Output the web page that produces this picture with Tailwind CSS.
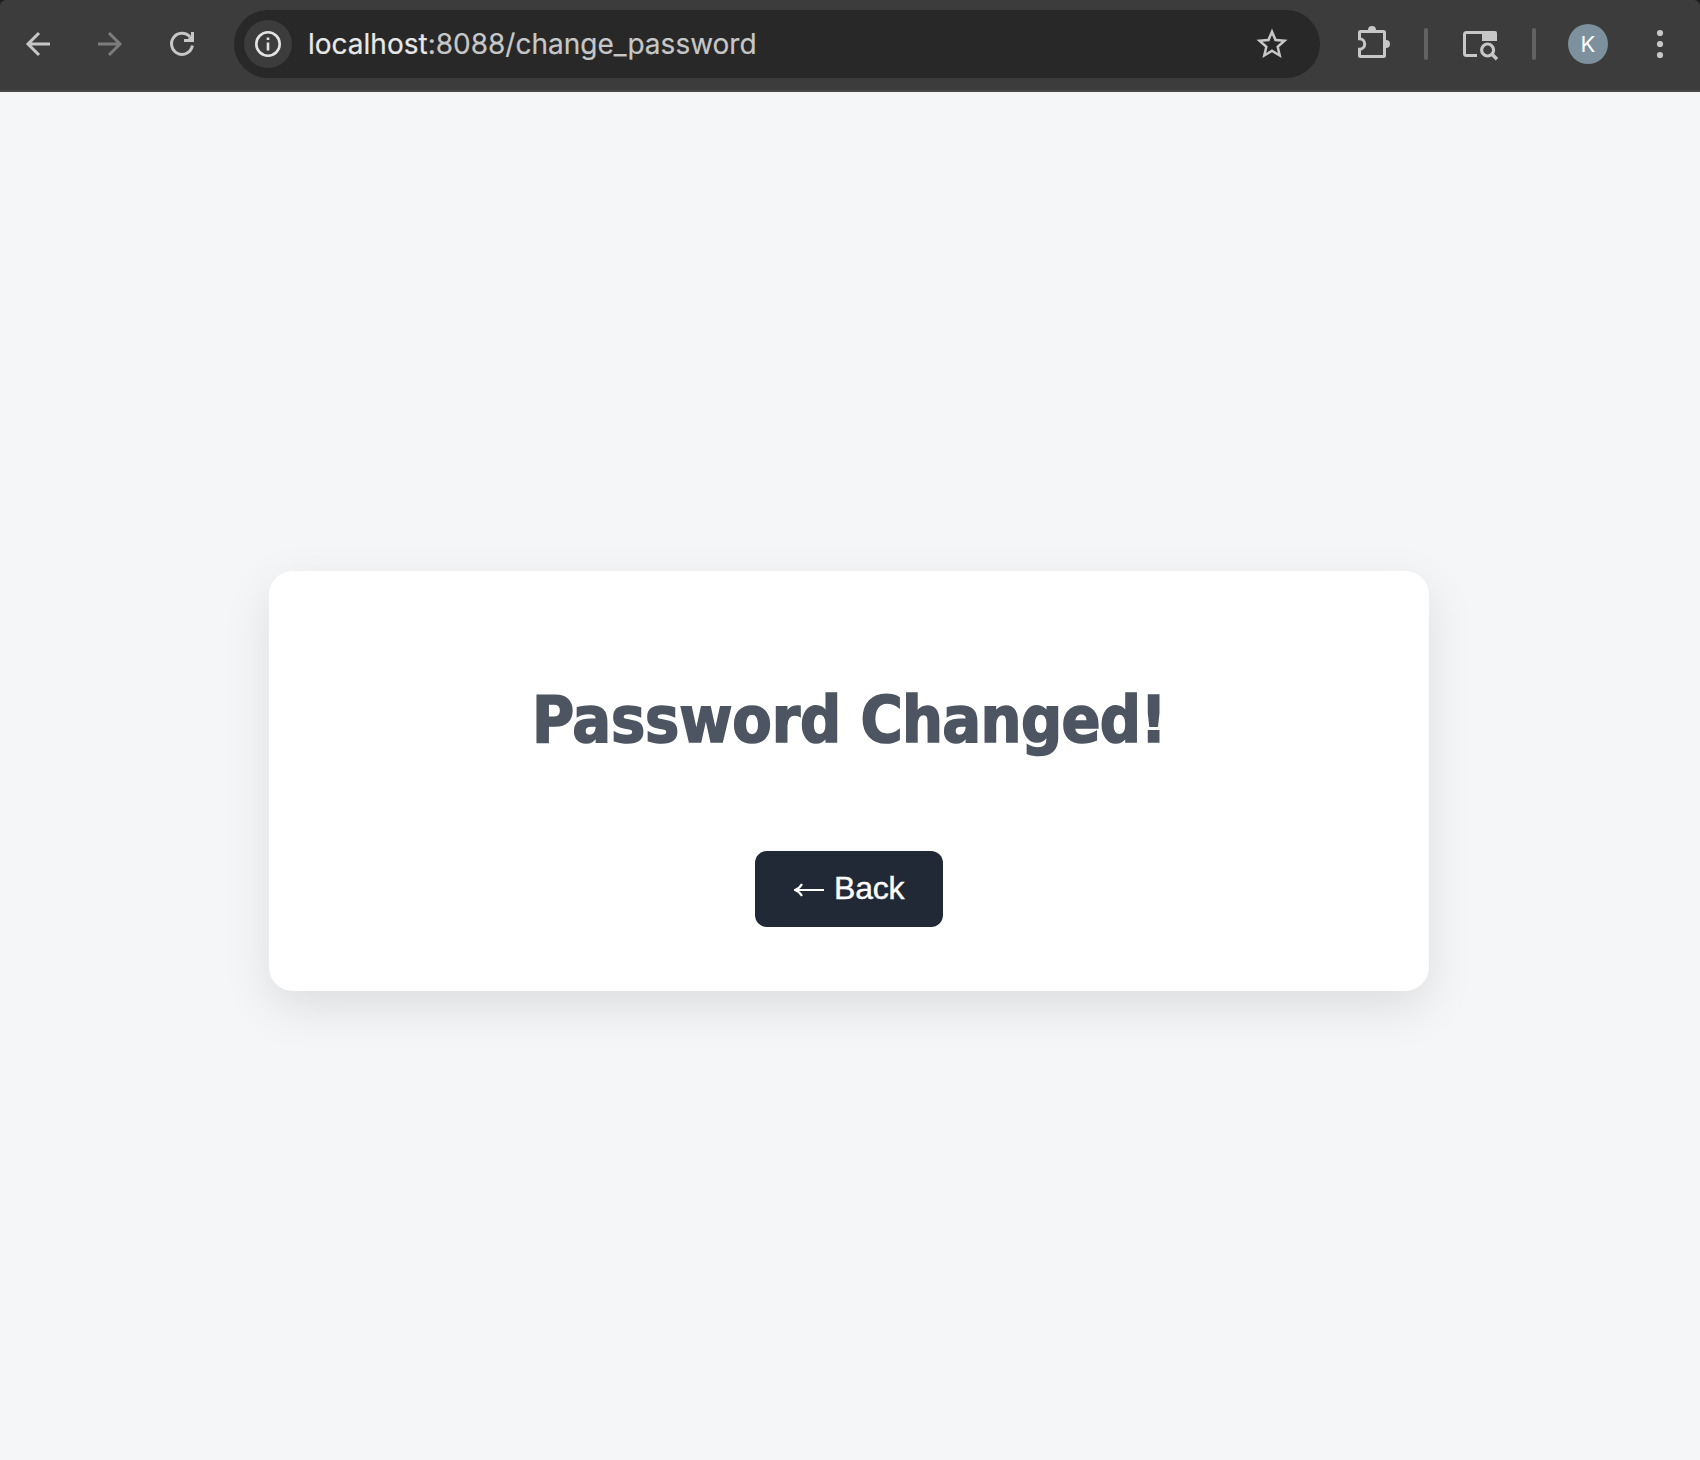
<!DOCTYPE html>
<html lang="en">
<head>
<meta charset="utf-8">
<title>Password Changed</title>
<script src="https://cdn.jsdelivr.net/npm/@tailwindcss/browser@4"></script>
</head>
<body class="flex h-[1460px] w-[1700px] flex-col overflow-hidden bg-[#f4f6f8]">
<div class="h-[92px] shrink-0 bg-[#1e1e1e]">
<header class="flex h-[92px] items-center rounded-t-[6px] border-b-2 border-[#474747] bg-[#3c3c3c] pb-0.5 text-[#c7c7c7]">
  <button class="ml-[18px] size-10" aria-label="Back"><svg viewBox="0 0 40 40" fill="none" stroke="currentColor" stroke-width="3"><path d="M32 20H10M21 9L10 20l11 11"/></svg></button>
  <button class="ml-8 size-10 text-[#7c7c7c]" aria-label="Forward"><svg viewBox="0 0 40 40" fill="none" stroke="currentColor" stroke-width="3"><path d="M8 20h22M19 9l11 11-11 11"/></svg></button>
  <button class="ml-8 size-10" aria-label="Reload"><svg viewBox="0 0 40 40" fill="none" stroke="currentColor" stroke-width="3"><path d="M30.400 21.500A10.500 10.500 0 1 1 28 13"/><path d="M30.500 8v8.500H22"/><path d="M25 16l5-5v5z" fill="currentColor" stroke="none"/></svg></button>
  <div class="ml-8 flex h-[68px] w-[1086px] items-center rounded-full bg-[#282828] pr-8 pl-2.5">
    <span class="flex size-12 items-center justify-center rounded-full bg-[#3c3c3c] text-[#e3e3e3]"><svg class="size-7" viewBox="0 0 28 28" fill="none" stroke="currentColor"><circle cx="14" cy="14" r="11.700" stroke-width="2.600"/><path d="M14 12.500V20.500M14 7.500v2.600" stroke-width="2.600"/></svg></span>
    <span class="ml-4 flex-1 font-['Inter',sans-serif] text-[28px] leading-none text-[#c7c7c7] [-webkit-text-stroke:0.2px]"><span class="text-[#e8e8e8]">localhost</span>:8088/change_password</span>
    <svg class="size-8" viewBox="1.700 1.650 20.600 20.600" fill="currentColor"><path d="M22 9.240l-7.190-.62L12 2 9.190 8.630 2 9.240l5.460 4.730L5.820 21 12 17.270 18.180 21l-1.630-7.030L22 9.240zM12 15.400l-3.760 2.270 1-4.280-3.320-2.880 4.380-.38L12 6.100l1.710 4.040 4.380.38-3.320 2.880 1 4.280L12 15.400z"/></svg>
  </div>
  <svg class="ml-9 size-9" viewBox="0 2 36 36"><path d="M3.500 14.800V8.500Q3.500 7.500 4.500 7.500H27.500Q28.500 7.500 28.500 8.500V31.500Q28.500 32.500 27.500 32.500H4.500Q3.500 32.500 3.500 31.500V25.200A5.200 5.200 0 0 0 3.500 14.800Z" fill="none" stroke="currentColor" stroke-width="3"/><path d="M12 6a4 4 0 0 1 8 0v1h-8zM29 16h1a4 4 0 0 1 0 8h-1z" fill="currentColor"/></svg>
  <i class="ml-[32px] h-8 w-1 rounded-full bg-[#626262]"></i>
  <svg class="ml-[32px] size-10" viewBox="0 0 40 40" fill="none" stroke="currentColor"><path d="M17 31.600H6.500Q4.500 31.600 4.500 29.600V10.500Q4.500 8.500 6.500 8.500H34" stroke-width="3"/><path d="M22 7h13q2 0 2 2v8H22z" fill="currentColor" stroke="none"/><circle cx="27.600" cy="26" r="6" stroke-width="3.200"/><path d="M32 30.300l5 5" stroke-width="3.500"/></svg>
  <i class="ml-8 h-8 w-1 rounded-full bg-[#626262]"></i>
  <span class="ml-8 flex size-10 items-center justify-center rounded-full bg-[#7c909e] font-['Inter',sans-serif] text-[22px] leading-none text-white">K</span>
  <svg class="ml-8 size-10" viewBox="0 0 40 40" fill="currentColor"><circle cx="20" cy="9" r="3.100"/><circle cx="20" cy="20" r="3.100"/><circle cx="20" cy="31" r="3.100"/></svg>
</header>
</div>
<main class="flex flex-1 items-start justify-center pt-[479px] pr-0.5">
  <section class="flex h-[420px] w-[1160px] flex-col items-center rounded-3xl bg-white pt-[105px] shadow-[0_16px_48px_rgba(0,0,0,0.1)]">
    <h1 class="h-[88px] font-['DejaVu_Sans_Condensed','DejaVu_Sans',sans-serif] text-[64px] leading-[88px] font-bold tracking-[-0.65px] whitespace-nowrap text-[#4d5562] [font-stretch:condensed] [-webkit-text-stroke:1.6px]"><span class="tracking-[-0.15px]">Password</span> Changed!</h1>
    <button class="mt-[87px] flex h-[76px] w-[188px] items-center rounded-xl bg-[#222936] pl-[39px] font-['Liberation_Sans',sans-serif] text-[32px] text-white">
      <svg class="mt-0.5 h-4 w-[30px]" viewBox="0 0 30 16" aria-hidden="true" fill="none" stroke="currentColor" stroke-width="2"><path d="M1 8h29"/><path d="M8 2Q5.500 6.500 1 8Q5.500 9.500 8 14" stroke-width="2.200"/></svg>
      <span class="ml-[10px] pb-[3px] tracking-[-0.2px] [-webkit-text-stroke:0.4px]">Back</span>
    </button>
  </section>
</main>
</body>
</html>
